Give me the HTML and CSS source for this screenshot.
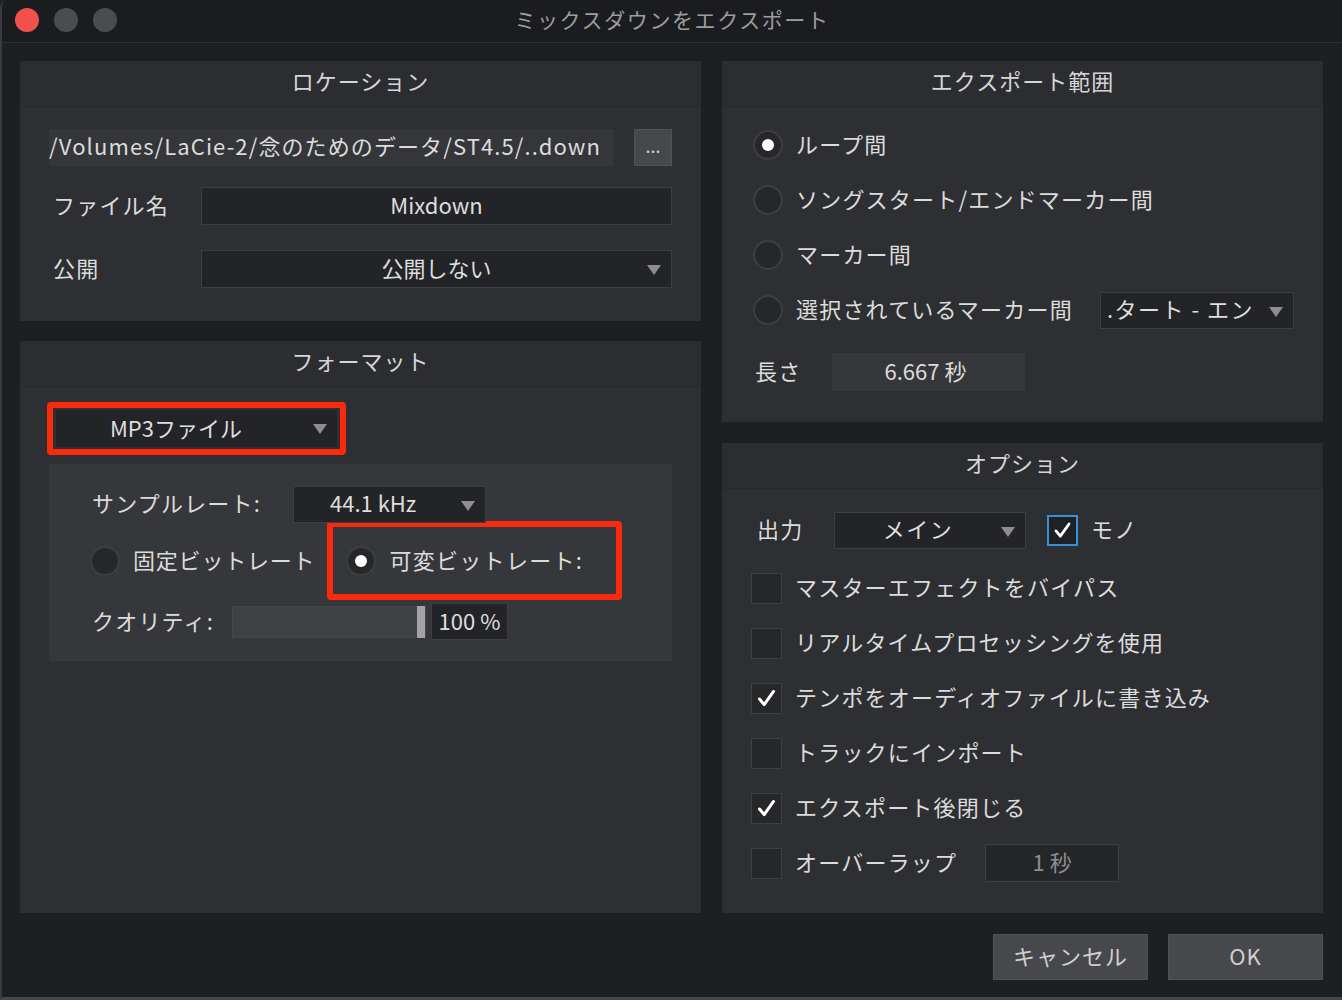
FILE: index.html
```html
<!DOCTYPE html>
<html lang="ja">
<head>
    <meta charset="UTF-8">
    <meta name="viewport" content="width=device-width, initial-scale=1.0">
    <title>ミックスダウンをエクスポート</title>
    <link rel="stylesheet" href="styles.css">
</head>
<body>
    <div class="window">
        <header class="titlebar">
            <div class="lights">
                <span class="light close"></span>
                <span class="light"></span>
                <span class="light"></span>
            </div>
            <div class="title">ミックスダウンをエクスポート</div>
        </header>

        <div class="content">
            <div class="column">
                <section class="panel location">
                    <div class="panel-head">ロケーション</div>
                    <div class="panel-body">
                        <div class="row">
                            <div class="path-field"><span>/Volumes/LaCie-2/念のためのデータ/ST4.5/..down</span></div>
                            <button class="browse">...</button>
                        </div>
                        <div class="row gap-21">
                            <span class="label loc-label">ファイル名</span>
                            <div class="field wide">Mixdown</div>
                        </div>
                        <div class="row gap-25">
                            <span class="label loc-label">公開</span>
                            <div class="select wide">公開しない<i class="arrow"></i></div>
                        </div>
                    </div>
                </section>

                <section class="panel format">
                    <div class="panel-head">フォーマット</div>
                    <div class="panel-body format-body">
                        <div class="mark mark-format">
                            <div class="select format-select">MP3ファイル<i class="arrow"></i></div>
                        </div>
                        <div class="subpanel">
                            <div class="row">
                                <span class="label rate-label">サンプルレート:</span>
                                <div class="select rate-select">44.1 kHz<i class="arrow"></i></div>
                            </div>
                            <div class="row bitrate-row">
                                <span class="radio"></span>
                                <span class="label radio-label">固定ビットレート</span>
                                <div class="mark mark-vbr">
                                    <span class="radio on"></span>
                                    <span class="label radio-label">可変ビットレート:</span>
                                </div>
                            </div>
                            <div class="row quality-row">
                                <span class="label quality-label">クオリティ:</span>
                                <div class="slider"><span class="handle"></span></div>
                                <div class="field quality-value">100 %</div>
                            </div>
                        </div>
                    </div>
                </section>
            </div>

            <div class="column narrow">
                <section class="panel range">
                    <div class="panel-head">エクスポート範囲</div>
                    <div class="panel-body range-body">
                        <div class="row"><span class="radio on"></span><span class="label radio-label">ループ間</span></div>
                        <div class="row gap-17"><span class="radio"></span><span class="label radio-label">ソングスタート/エンドマーカー間</span></div>
                        <div class="row gap-17"><span class="radio"></span><span class="label radio-label">マーカー間</span></div>
                        <div class="row gap-17">
                            <span class="radio"></span><span class="label radio-label">選択されているマーカー間</span>
                            <div class="select marker-select"><span class="clip">.タート - エン</span><i class="arrow"></i></div>
                        </div>
                        <div class="row length-row">
                            <span class="label short-label">長さ</span>
                            <div class="readout">6.667 秒</div>
                        </div>
                    </div>
                </section>

                <section class="panel options">
                    <div class="panel-head">オプション</div>
                    <div class="panel-body options-body">
                        <div class="row">
                            <span class="label short-label out-label">出力</span>
                            <div class="select out-select">メイン<i class="arrow"></i></div>
                            <span class="check checked focus">
                                <svg viewBox="0 0 31 31"><polyline points="8,16 13,22 23,8"/></svg>
                            </span>
                            <span class="label check-label">モノ</span>
                        </div>
                        <div class="row gap-20"><span class="check"></span><span class="label check-label">マスターエフェクトをバイパス</span></div>
                        <div class="row gap-17"><span class="check"></span><span class="label check-label">リアルタイムプロセッシングを使用</span></div>
                        <div class="row gap-17">
                            <span class="check checked"><svg viewBox="0 0 31 31"><polyline points="8,16 13,22 23,8"/></svg></span>
                            <span class="label check-label">テンポをオーディオファイルに書き込み</span>
                        </div>
                        <div class="row gap-17"><span class="check"></span><span class="label check-label">トラックにインポート</span></div>
                        <div class="row gap-17">
                            <span class="check checked"><svg viewBox="0 0 31 31"><polyline points="8,16 13,22 23,8"/></svg></span>
                            <span class="label check-label">エクスポート後閉じる</span>
                        </div>
                        <div class="row gap-17">
                            <span class="check"></span><span class="label check-label">オーバーラップ</span>
                            <div class="field overlap-field">1 秒</div>
                        </div>
                    </div>
                </section>
            </div>
        </div>

        <footer class="footer">
            <button class="action">キャンセル</button>
            <button class="action">OK</button>
        </footer>
    </div>
</body>
</html>
```

FILE: styles.css
```css
body {
    margin: 0;
    background-color: #1e1f22;
    font-family: "Noto Sans CJK JP", "Noto Sans", sans-serif;
    color: #dcdcdc;
}
.window {
    width: 1342px;
    height: 1000px;
    box-sizing: border-box;
    border-left: 2px solid #3a3b3f;
    border-bottom: 3px solid #46474b;
    border-top-left-radius: 8px;
    background-color: #1e1f22;
    overflow: hidden;
}
.titlebar {
    height: 42px;
    border-bottom: 1px solid #303135;
    background-color: #1b1c1f;
    display: flex;
    align-items: center;
    position: relative;
}
.lights {
    display: flex;
    gap: 15px;
    margin-left: 13px;
    margin-top: -3px;
}
.light {
    width: 24px;
    height: 24px;
    border-radius: 50%;
    background-color: #4b4c50;
}
.light.close {
    background-color: #f2504a;
}
.title {
    position: absolute;
    left: 0;
    right: 0;
    top: 0;
    line-height: 38px;
    text-align: center;
    font-size: 21px;
    letter-spacing: 1.6px;
    color: #9d9d9f;
}
.content {
    display: flex;
    gap: 21px;
    padding: 18px 19px 0 18px;
    height: 852px;
}
.column {
    width: 681px;
    display: flex;
    flex-direction: column;
    gap: 20px;
}
.column.narrow {
    width: 601px;
    gap: 21px;
}
.panel {
    background-color: #2e2f33;
    display: flex;
    flex-direction: column;
}
.panel.location { height: 260px; }
.panel.range { height: 361px; }
.panel.format,
.panel.options { flex: 1; }
.panel-head {
    height: 46px;
    box-sizing: border-box;
    padding-bottom: 7px;
    border-bottom: 1px solid #28292c;
    background-color: #2c2d31;
    display: flex;
    align-items: center;
    justify-content: center;
    font-size: 22px;
    color: #d6d6d6;
    letter-spacing: 1px;
}
.panel-body {
    padding: 21px 29px 0 29px;
}
.row {
    display: flex;
    align-items: center;
    height: 38px;
}
.gap-17 { margin-top: 17px; }
.gap-20 { margin-top: 20px; }
.gap-21 { margin-top: 21px; }
.gap-25 { margin-top: 25px; }
.label {
    font-size: 22px;
    white-space: nowrap;
    letter-spacing: 1.2px;
    padding-bottom: 4px;
}
.loc-label {
    width: 148px;
    padding-left: 4px;
}
.path-field {
    width: 565px;
    height: 37px;
    box-sizing: border-box;
    padding-bottom: 4px;
    background-color: #35363a;
    display: flex;
    justify-content: flex-end;
    align-items: center;
    overflow: hidden;
    font-size: 22px;
    letter-spacing: 1.1px;
    white-space: nowrap;
}
.path-field span {
    padding-right: 13px;
}
.browse {
    margin-left: 20px;
    width: 38px;
    height: 37px;
    background-color: #47484c;
    border: 1px solid #515256;
    color: #d0d0d0;
    font-family: inherit;
    font-size: 18px;
    padding: 0 0 4px 0;
    line-height: 30px;
}
.field,
.select {
    height: 38px;
    box-sizing: border-box;
    padding-bottom: 4px;
    background-color: #232427;
    border: 1px solid #3d3e42;
    display: flex;
    align-items: center;
    justify-content: center;
    font-size: 22px;
    color: #dedede;
    position: relative;
    white-space: nowrap;
}
.wide { width: 471px; }
.arrow {
    position: absolute;
    right: 10px;
    top: 14px;
    width: 0;
    height: 0;
    border-left: 7px solid transparent;
    border-right: 7px solid transparent;
    border-top: 10px solid #8e8e91;
}
.mark {
    border: 6px solid #fb2a0c;
    border-radius: 4px;
    box-sizing: border-box;
}
.format-body {
    padding-top: 15px;
}
.mark-format {
    width: 299px;
    height: 53px;
    margin-left: -2px;
    padding: 2px 3px;
}
.format-select {
    width: 281px;
    height: 37px;
    border: none;
    justify-content: flex-start;
    padding-left: 54px;
}
.subpanel {
    margin-top: 9px;
    background-color: #36373b;
    height: 197px;
    box-sizing: border-box;
    padding: 21px 0 0 43px;
}
.rate-label { width: 201px; }
.rate-select {
    width: 193px;
    height: 37px;
    justify-content: flex-start;
    padding-left: 36px;
}
.bitrate-row {
    height: 79px;
    margin-top: -2px;
}
.bitrate-row > .radio-label {
    letter-spacing: 0.8px;
}
.radio {
    width: 30px;
    height: 30px;
    box-sizing: border-box;
    border-radius: 50%;
    border: 2px solid #3e3f43;
    background-color: #262729;
    flex-shrink: 0;
    position: relative;
}
.bitrate-row > .radio { margin-left: -2px; }
.radio.on::after {
    content: "";
    position: absolute;
    left: 7px;
    top: 7px;
    width: 12px;
    height: 12px;
    border-radius: 50%;
    background-color: #ffffff;
}
.radio-label {
    margin-left: 13px;
}
.mark-vbr {
    margin-left: 12px;
    width: 295px;
    height: 79px;
    display: flex;
    align-items: center;
    padding-left: 13px;
}
.mark-vbr .radio-label {
    letter-spacing: 1.3px;
}
.quality-row {
    margin-top: 3px;
    height: 37px;
}
.quality-label { width: 140px; }
.slider {
    width: 194px;
    height: 32px;
    box-sizing: border-box;
    background-color: #404145;
    border: 1px solid #46474b;
    position: relative;
}
.slider .handle {
    position: absolute;
    right: 0;
    top: -1px;
    width: 8px;
    height: 32px;
    background-color: #a3a3a6;
}
.quality-value {
    margin-left: 5px;
    width: 77px;
    height: 37px;
}
.range-body {
    padding: 19px 29px 0 31px;
}
.marker-select {
    margin-left: auto;
    width: 194px;
    height: 37px;
    justify-content: flex-start;
    padding-left: 6px;
    overflow: hidden;
    letter-spacing: 1.5px;
}
.marker-select .clip {
    width: 160px;
    overflow: hidden;
}
.length-row {
    margin-top: 24px;
}
.short-label {
    width: 79px;
    padding-left: 2px;
    box-sizing: border-box;
}
.readout {
    width: 193px;
    height: 38px;
    background-color: #36373b;
    display: flex;
    align-items: center;
    justify-content: center;
    font-size: 22px;
    padding: 0 6px 4px 0;
    box-sizing: border-box;
}
.options-body {
    padding: 22px 29px 0 29px;
}
.out-label {
    margin-left: 4px;
}
.out-select {
    width: 192px;
    height: 37px;
    padding-right: 24px;
    letter-spacing: 1.5px;
}
.check {
    width: 31px;
    height: 31px;
    box-sizing: border-box;
    border: 1px solid #3f4044;
    background-color: #262729;
    flex-shrink: 0;
    display: flex;
}
.check svg {
    width: 100%;
    height: 100%;
}
.check polyline {
    fill: none;
    stroke: #ffffff;
    stroke-width: 3.2;
    stroke-linecap: round;
    stroke-linejoin: round;
}
.check.focus {
    margin-left: 21px;
    border: 2px solid #3a8fd9;
    background-color: #1f2124;
}
.check-label {
    margin-left: 13px;
}
.overlap-field {
    margin-left: 28px;
    width: 134px;
    color: #8d8d90;
    background-color: #252629;
}
.footer {
    display: flex;
    justify-content: flex-end;
    gap: 20px;
    padding: 21px 19px 0 0;
}
.action {
    width: 155px;
    height: 46px;
    background-color: #47484c;
    border: 1px solid #505155;
    color: #cfcfcf;
    font-family: inherit;
    font-size: 22px;
    letter-spacing: 1px;
    padding: 0 0 4px 0;
}
```
